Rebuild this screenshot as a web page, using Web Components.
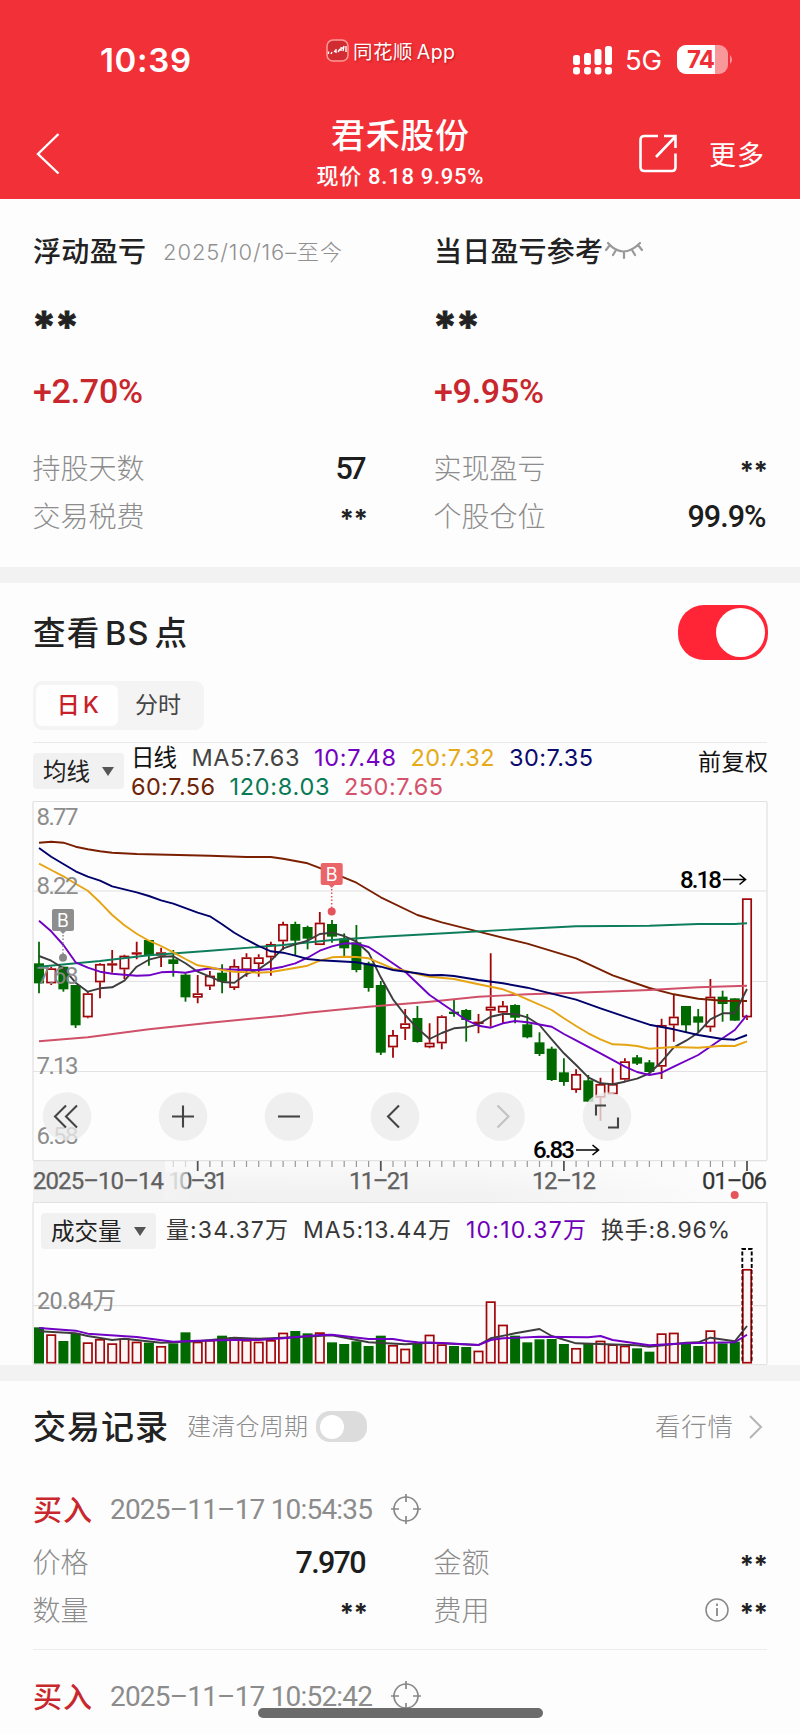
<!DOCTYPE html>
<html lang="zh-CN">
<head>
<meta charset="utf-8">
<title>君禾股份</title>
<style>
body{margin:0;background:#fdfdfd;color:#222;font-family:Inter,"Noto Sans CJK SC",sans-serif}
</style>
</head>
<body>
<stock-page></stock-page>
<script>
const define=(name,html,ready)=>customElements.define(name,class extends HTMLElement{
  connectedCallback(){
    if(this.shadowRoot)return;
    const t=document.createElement('template');t.innerHTML=html;
    this.attachShadow({mode:'open'}).append(t.content.cloneNode(true));
    if(ready)ready.call(this,this.shadowRoot);
  }
});

/* text run tracked out or in to a given width */
define('fit-text',`<style>:host{display:inline-block;white-space:nowrap;flex:none}span{display:inline-block}</style><span><slot></slot></span>`,function(root){
  const w=+this.getAttribute('w'),s=root.querySelector('span');
  if(!w)return;
  const n=[...this.textContent].length;
  s.style.letterSpacing=((w-s.getBoundingClientRect().width)/Math.max(1,n-1))+'px';
  this.style.width=w+'px';
});

define('status-bar',`<style>
:host{display:flex;align-items:center;height:108px;box-sizing:border-box;padding:12px 65px 0 100px;color:#fff}
.time{font-size:33px;font-weight:600;width:227px}
.mark{display:flex;align-items:center;gap:4px;margin-top:-19px;font-size:19.5px;text-shadow:1px 1px 2px #8008;width:247px;word-spacing:-2px}
.net{font-size:27.5px;margin:0 15px 0 13px}
svg{display:block;flex:none}
</style>
<div class="time"><fit-text w="91">10:39</fit-text></div>
<div class="mark"><svg width="23" height="23" viewBox="0 0 23 23"><rect x="1" y="1" width="21" height="21" rx="6" fill="#d22c33" stroke="#ff9b98" stroke-width="1.5"/><path d="M2.500 15V12.500M5 15L6 13M8 12L10 13L10 10M12 13L14 10M15 12V9L18 9M17 12L18 7M20 13V7" fill="none" stroke="#fff" stroke-width="1.400"/></svg><fit-text w="102">同花顺 App</fit-text></div>
<svg width="40" height="30" fill="#fff"><rect x="1" y="10" width="7" height="10" rx="2.5"/><rect x="12" y="8" width="7" height="12" rx="2.5"/><rect x="22.500" y="4" width="7" height="16" rx="2.5"/><rect x="33" y="1" width="7" height="19" rx="2.5"/><rect x="1" y="22" width="7" height="7.5" rx="3"/><rect x="12" y="22" width="7" height="7.5" rx="3"/><rect x="22.500" y="22" width="7" height="7.5" rx="3"/><rect x="33" y="22" width="7" height="7.5" rx="3"/></svg>
<div class="net"><fit-text w="37">5G</fit-text></div>
<svg width="58" height="30"><defs><clipPath id="b"><rect y="0" width="51" height="29" rx="9"/></clipPath></defs><g clip-path="url(#b)"><rect width="51" height="29" fill="#f9989b"/><rect width="38" height="29" fill="#fff"/></g><path d="M53 10q4 4.500 0 9z" fill="#f9989b"/><text x="10" y="23" font-size="24" font-weight="700" fill="#ef2e36" textLength="28">74</text></svg>`);

define('nav-bar',`<style>
:host{display:grid;grid-template-columns:280px 240px 1fr;height:91px;color:#fff}
.back{padding:25px 0 0 36px}
.mid{text-align:center}
.t{font-size:34px;line-height:46px;font-weight:500;margin-top:5px}
.s{font-size:22px;line-height:30px;margin-top:3px;font-family:Roboto,"Noto Sans CJK SC",sans-serif;font-weight:500}
.r{display:flex;align-items:flex-start;padding:26px 0 0 118px;gap:31px;font-size:27px}
.r fit-text{line-height:43px}
svg{display:block;flex:none}
</style>
<div class="back"><svg width="25" height="42" fill="none" stroke="#fff" stroke-width="2.400"><path d="M22.500 1L2 21L22.500 40.500"/></svg></div>
<div class="mid"><div class="t"><fit-text w="138">君禾股份</fit-text></div><div class="s"><fit-text w="167">现价 8.18 9.95%</fit-text></div></div>
<div class="r"><svg width="40" height="40" fill="none" stroke="#fff" stroke-width="2.600"><path d="M20 2H6.500Q2.500 2 2.500 6V33Q2.500 37 6.500 37H34Q37.500 37 37.500 33V19.500M26 2H37.500V14M37 3L18 23"/></svg><fit-text w="55">更多</fit-text></div>`);

define('kv-row',`<style>
:host{display:flex;justify-content:space-between;align-items:center;height:48px;font-size:28px;color:#8c8c8c;font-weight:300}
.k{margin:-3px 0 0 -.5px}
.v{display:flex;align-items:center;color:#1d1d1d;font:500 30.500px Roboto,sans-serif;margin-right:-.5px}
</style><span class="k"><slot></slot></span><div class="v"><slot name="icon"></slot><slot name="v"></slot></div>`);

/* pair of asterisks standing for a hidden amount */
define('hidden-amount',`<style>:host{display:block;width:27px;font:700 26px/34px Inter,sans-serif;color:#222;white-space:nowrap;height:34px}
:host([big]){width:50px;font-size:43px;line-height:50px;height:44px;margin-left:-1px}
div{padding-top:3px}:host([big]) div{padding-top:6px}</style><div><fit-text>**</fit-text></div>`,function(root){
  const big=this.hasAttribute('big'),f=root.querySelector('fit-text');
  f.style.letterSpacing=big?'-1px':'-.5px';
  if(big)f.style.webkitTextStroke='.8px #222';
});

define('profit-panel',`<style>
:host{display:grid;grid-template-columns:333px 332px;column-gap:68px;padding:0 33px;height:368px;border-bottom:16px solid #f2f2f3}
.h{display:flex;align-items:center;height:48px;margin-top:27px;font-size:28px;font-weight:500}
.d{font-size:22px;font-weight:300;color:#909090;margin-left:17px}
hidden-amount[big]{margin-top:21px}
.p{height:44px;line-height:44px;margin:30px 0 31px;font:500 34px/44px Roboto,sans-serif;color:#c8282d}
svg{display:block;margin-left:2px}
</style>
<section><div class="h"><fit-text w="113">浮动盈亏</fit-text><span class="d"><fit-text w="179">2025/10/16–至今</fit-text></span></div>
<hidden-amount big></hidden-amount><div class="p"><fit-text w="110">+2.70%</fit-text></div>
<kv-row>持股天数<fit-text slot="v" w="31">57</fit-text></kv-row><kv-row>交易税费<hidden-amount slot="v"></hidden-amount></kv-row></section>
<section><div class="h"><fit-text w="169">当日盈亏参考</fit-text><svg width="38" height="22" fill="none" stroke="#999" stroke-width="2.200" stroke-linecap="round"><path d="M3 4Q18 21 35 4M5 6L1 11M11 11L8 16M19 13V19M27 11L30 16M33 6L37 11"/></svg></div>
<hidden-amount big></hidden-amount><div class="p"><fit-text w="110">+9.95%</fit-text></div>
<kv-row>实现盈亏<hidden-amount slot="v"></hidden-amount></kv-row><kv-row>个股仓位<fit-text slot="v" w="79">99.9%</fit-text></kv-row></section>`);

define('toggle-switch',`<style>
:host{display:flex;box-sizing:border-box;width:51px;height:31px;border-radius:14px;background:#dcdcdd;padding:3.500px;flex:none}
i{width:24px;height:24px;border-radius:50%;background:#fff}
:host([on]){width:90px;height:55px;border-radius:26px;background:#ff2436;padding:3px;justify-content:flex-end;margin-right:-1px}
:host([on]) i{width:49px;height:49px}
</style><i></i>`);

define('select-chip',`<style>
:host{display:flex;box-sizing:border-box;align-items:center;justify-content:space-between;height:36px;border-radius:4px;background:#f1f1f1;font-size:23.500px;padding:0 10px;color:#222;flex:none}
span{margin-top:-2px}
i{border:6px solid transparent;border-top:9px solid #555;border-bottom:0}
</style><span><slot></slot></span><i></i>`);

const STEP=12.207,X0=39;
const X=i=>(X0+i*STEP).toFixed(1);
/* high, body top, body bottom, low in thirds of a pixel, and direction */
const CANDLES=`455 520 580 610 g|530 535 580 585 r|530 530 598 605 g|585 585 706 714 g|605 610 682 685 r|520 522 577 625 r|480 520 526 548 r|494 497 538 567 r|455 487 491 508 r|450 450 498 527 g|473 487 497 531 r|480 508 522 560 g|550 554 622 635 g|555 610 623 640 r|543 557 589 600 r|523 548 575 610 g|508 528 594 600 r|490 502 540 560 r|493 502 522 560 r|455 462 502 557 r|395 402 454 480 r|395 402 452 495 g|407 411 446 478 g|366 398 465 465 r|390 402 440 458 g|430 445 475 500 g|405 457 540 547 g|515 520 594 605 g|573 585 788 795 g|720 735 772 803 r|657 700 716 750 r|648 684 756 758 g|700 758 772 775 r|676 679 760 778 r|628 665 672 680 g|657 660 690 755 g|672 695 702 730 r|490 650 662 710 r|633 647 668 700 r|643 645 683 700 g|672 703 742 745 g|727 757 792 798 g|770 776 870 873 g|805 847 876 887 g|838 852 900 908 r|855 871 935 936 g|863 882 923 992 r|835 882 913 913 r|805 814 869 872 r|795 802 821 825 g|810 817 846 850 g|686 705 830 867 r|615 680 706 755 r|648 648 706 726 g|657 679 698 728 g|567 620 712 725 r|602 620 642 695 g|625 625 692 692 g|325 325 682 690 r`.split('|').map(s=>s.split(' '));
const VOLUME='382 403 423 400 427 417 430 415 425 428 438 430 397 425 420 407 412 420 425 420 398 393 400 397 427 432 424 438 407 435 446 432 404 433 438 441 452 304 374 407 427 418 417 432 444 432 422 433 437 445 455 400 398 430 438 391 430 425 207'.split(' ');
const VDIR='grggrrrrrgrggrrgrrrrrggrggggg'+'rrgrrggrrrgggggrgrrrggrrggrggr';
const MA={
 '#7a1f00':'0:158 1:155 2:158 3:170 4:178 5:184 6:188 8:192 14:197 17:201 19:201 20:206 22:220 24:248 26:278 28:322 31:375 33:397 36:425 40:461 44:505 47:556 50:594 52:613 54:626 56:632 58:633',
 '#0e7d5c':'0:530 5:513 9:496 14:482 20:465 24:450 28:440 34:428 40:416 44:409 50:407 54:402 57:402 58:400',
 '#cf5068':'0:754 4:742 9:718 14:698 20:677 22:668 27:650 32:635 36:620 40:613 44:608 50:600 54:592 58:587',
 '#3d3d3d':'0:498 1:512 2:535 3:578 4:605 5:595 6:592 7:572 8:530 9:509 10:500 11:499 12:520 13:545 14:560 15:576 16:578 17:552 18:538 19:512 20:475 21:463 22:452 23:432 24:428 25:438 26:455 27:488 28:562 29:628 30:675 31:715 32:747 33:729 34:715 35:712 36:703 37:680 38:672 39:672 40:682 41:705 42:748 43:790 44:825 45:862 46:880 47:883 48:875 49:866 50:850 51:815 52:772 53:752 54:728 55:688 56:670 57:670 58:597',
 '#6f00c4':'0:392 1:424 2:465 3:517 4:533 5:545 6:551 8:557 9:556 10:547 11:545 12:548 13:541 14:535 15:538 17:540 18:540 19:537 20:530 21:520 22:503 23:482 24:469 25:460 26:461 27:471 28:495 30:545 32:615 34:665 35:690 36:707 37:713 38:700 39:693 40:697 42:710 43:732 44:751 46:790 48:830 49:846 50:855 51:848 52:830 54:795 56:745 57:720 58:675',
 '#e6a412':'0:221 1:240 2:259 3:281 4:302 5:337 6:375 7:406 8:431 9:452 10:468 11:487 12:507 13:526 14:532 15:540 16:545 18:548 19:546 20:540 22:527 23:512 24:502 25:500 26:501 27:505 28:520 29:536 30:542 31:552 32:560 34:567 36:583 38:598 39:612 40:628 42:660 43:685 44:708 45:730 46:748 47:763 48:764 49:768 50:776 52:771 54:773 56:767 57:768 58:754',
 '#00006b':'0:174 1:200 2:222 3:244 4:260 5:272 6:289 8:307 9:318 10:331 11:341 13:368 14:379 15:403 16:428 17:449 18:468 19:484 20:488 21:497 22:507 23:511 26:517 28:530 29:540 31:550 32:556 33:555 34:558 36:570 38:580 40:593 44:629 46:655 48:680 50:704 52:718 54:735 56:747 57:749 58:735'};
const VMA={
 '#3d3d3d':'0:394 3:400 4:408 6:420 7:416 10:428 13:424 16:413 18:416 20:413 24:406 27:427 30:433 32:428 36:435 37:415 39:400 41:387 42:408 44:430 49:436 50:440 53:428 54:427 55:413 57:424 58:378',
 '#6f00c4':'0:384 3:392 4:401 8:411 11:425 13:422 16:420 18:420 20:415 23:405 24:404 27:417 29:417 30:423 31:427 33:429 36:435 37:420 38:415 41:410 45:412 46:408 47:420 50:436 53:430 57:427 58:404'};
const lines=(set,base)=>Object.entries(set).map(([c,s])=>`<polyline fill="none" stroke="${c}" stroke-width="1.900" stroke-linejoin="round" points="${s.split(' ').map(p=>{const[a,b]=p.split(':');return X(+a)+','+(base+b/3).toFixed(1)}).join(' ')}"/>`).join('');
const GREEN='#006a00',RED='#a00508';

function priceSvg(){
  const candles=CANDLES.map(([h,t,b,l,d],i)=>{
    const y=v=>790+v/3,x=+X(i),bh=Math.max(1.6,(b-t)/3),c=d=='g'?GREEN:RED;
    if(d=='g')return `<path d="M${x} ${y(h)}V${y(l)}" stroke="${c}" stroke-width="1.800"/><rect x="${x-5}" y="${y(t)}" width="10" height="${bh}" fill="${c}"/>`;
    return `<path d="M${x} ${y(h)}V${y(t)}M${x} ${y(b)}V${y(l)}" stroke="${c}" stroke-width="1.800"/><rect x="${x-4.2}" y="${y(t)+.8}" width="8.400" height="${Math.max(.6,bh-1.6)}" fill="#fdfdfd" stroke="${c}" stroke-width="1.700"/>`;
  }).join('');
  const lab=[['8.77',825],['8.22',894],['7.68',984],['7.13',1074],['6.58',1144]];
  const marker=(x,y,dot,c,dark)=>`<rect x="${x-11}" y="${y}" width="22" height="22" rx="2" fill="${c}"/><path d="M${x-3} ${y+22}h6l-3 3z" fill="${c}"/><path d="M${x} ${y+26}V${dot}" stroke="${dark}" stroke-width="1.500" stroke-dasharray="1.500 2"/><circle cx="${x}" cy="${dot}" r="4" fill="${dark}"/><text x="${x-6}" y="${y+17.500}" font-family="Inter" font-size="18" fill="#fff" textLength="12">B</text>`;
  let ticks='';
  for(let i=11;i<59;i++){const m=(i-13)%15==0;ticks+=`<path d="M${X(i)} 1161v${m?10:6}" stroke="${m?'#555':'#999'}" stroke-width="${m?1.8:1.2}" opacity="${i<13?.35:1}"/>`}
  const circle=(x,p,s='#444')=>`<circle cx="${x}" cy="1116.500" r="24.300" fill="#ebebeb" opacity=".78"/><path d="${p}" transform="translate(${x} 1116.500)" fill="none" stroke="${s}" stroke-width="2.100"/>`;
  return `<svg width="800" height="401" viewBox="0 801 800 401" font-family="Roboto,'Noto Sans CJK SC',sans-serif">
<defs><linearGradient id="ax"><stop offset="0" stop-color="#f1f1f1"/><stop offset=".6" stop-color="#f2f2f2"/><stop offset="1" stop-color="#fdfdfd"/></linearGradient>
<linearGradient id="av" x2="0" y2="1"><stop offset="0" stop-color="#fdfdfd" stop-opacity=".75"/><stop offset=".8" stop-color="#fdfdfd" stop-opacity="0"/></linearGradient>
<linearGradient id="fd"><stop offset="0" stop-color="#f3f3f3"/><stop offset=".5" stop-color="#f3f3f3" stop-opacity=".8"/><stop offset="1" stop-color="#f3f3f3" stop-opacity=".4"/></linearGradient></defs>
<rect x="33" y="1161" width="734" height="41" fill="url(#ax)"/><rect x="165" y="1161" width="602" height="41" fill="url(#av)"/>
<g stroke="#e2e2e2" stroke-width="1.200" fill="none"><path d="M33 801.500H767M33 891H767M33 981.500H767M33 1071.500H767M33 1160.700H767M33 802V1160M767 802V1160"/></g>
${candles}${lines(MA,790)}
<g fill="#888" font-size="24" opacity=".95">${lab.map(([t,y])=>`<text x="36.500" y="${y}" textLength="42">${t}</text>`).join('')}</g>
${marker(63,909,957.7,'#8e8e8e','#888')}${marker(331.7,863,911.5,'#ea6468','#e5535b')}
<g fill="#000" font-size="24" font-weight="500"><text x="680" y="888" textLength="42">8.18</text><text x="533" y="1158" textLength="42">6.83</text></g>
<path d="M723 879.500H745M739.500 874.500L745.500 879.500L739.500 884.500M576 1150H598M592.500 1145L598.500 1150L592.500 1155" fill="none" stroke="#000" stroke-width="1.600"/>
${circle(67,'M-1 -11L-12 0L-1 11M10 -11L-1 0L10 11')}${circle(183,'M-11 0H11M0 -11V11')}${circle(289,'M-11 0H11')}${circle(395,'M4 -11L-7 0L4 11')}${circle(500.5,'M-3 -11L8 0L-3 11','#c2c2c2')}${circle(607,'M-1 -11H-11V-1M11 1V11H1')}
${ticks}
<g fill="#606060" font-size="24" stroke="#606060" stroke-width=".25"><text x="168" y="1188.700" textLength="60">10–31</text><rect x="164" y="1172" width="24" height="28" fill="url(#fd)" stroke="none"/><text x="33" y="1188.700" textLength="131">2025–10–14</text><text x="349" y="1188.700" textLength="63">11–21</text><text x="532" y="1188.700" textLength="64">12–12</text><text x="702" y="1188.700" textLength="65" fill="#333" stroke="#333">01–06</text></g>
<circle cx="734.700" cy="1195" r="4" fill="#e5535b"/></svg>`;
}
function volumeSvg(){
  const bars=VOLUME.map((v,i)=>{
    const y=1200+v/3,x=+X(i);
    return VDIR[i]=='g'?`<rect x="${x-5}" y="${y}" width="10" height="${1363.5-y}" fill="${GREEN}"/>`:`<rect x="${x-4.2}" y="${y+.8}" width="8.400" height="${1361.9-y}" fill="#fdf6f6" stroke="${RED}" stroke-width="1.700"/>`;
  }).join('');
  return `<svg width="800" height="115" viewBox="0 1250 800 115" overflow="visible" font-family="Roboto,'Noto Sans CJK SC',sans-serif"><g stroke="#e2e2e2" stroke-width="1.200" fill="none"><path d="M33 1305.700H767M33 1364.500H767M33 1202.500H767M33 1202.500V1364M767 1202.500V1364"/></g>${bars}${lines(VMA,1200)}
<path d="M742.300 1268V1249H751.700V1268" fill="none" stroke="#000" stroke-width="1.900" stroke-dasharray="4 2.200"/><path d="M742.300 1270V1363M751.700 1270V1363" stroke="#500" stroke-width="1.700" stroke-dasharray="4 2.200"/>
<text x="37" y="1309" font-size="23.500" fill="#888" textLength="79">20.84万</text></svg>`;
}

define('price-chart',`<style>:host{display:block;height:401px}svg{display:block}</style>`+priceSvg());
define('volume-chart',`<style>:host{display:block;height:163px}
.l{display:flex;align-items:center;height:48px;padding:4px 0 0 41px;box-sizing:border-box;font-size:23px;color:#383838;white-space:nowrap}
select-chip{width:115px;margin-right:10px;margin-top:6px}svg{display:block}
.l fit-text{margin-right:15px;margin-top:0}.p{color:#6f00b8}</style>
<div class="l"><select-chip>成交量</select-chip><fit-text w="122">量:34.37万</fit-text><fit-text w="148">MA5:13.44万</fit-text><fit-text w="120" class="p">10:10.37万</fit-text><fit-text w="129">换手:8.96%</fit-text></div>`+volumeSvg());

define('bs-panel',`<style>
:host{display:block}
.h{display:flex;justify-content:space-between;align-items:center;height:55px;padding:22px 33px 0;font-size:32.500px;font-weight:500}
.h fit-text{word-spacing:-5px;margin-top:-4px}
.tabs{display:flex;box-sizing:border-box;width:171px;height:49px;margin:21px 0 0 33px;padding:4px;background:#f4f4f4;border-radius:9px;font-size:23px;line-height:40px;color:#444}
.tabs b{width:82px;background:#fefefe;border-radius:6px;color:#c8202a;text-align:center;font-weight:500;margin-left:-1px}
.tabs span{flex:1;text-align:center;margin-left:-2px}
.ma{display:flex;margin:12px 33px 0;border-top:1px solid #e9e9e9;height:58px;font-size:23.500px}
select-chip{width:91px;margin:10px 7px 0 0}
.g{width:480px}.g div{display:flex;gap:14.500px;height:28.500px;line-height:30px}
.adj{margin-left:auto;line-height:39px;font-size:23px;color:#111;margin-right:-1px}
</style>
<div class="h"><fit-text w="154">查看 BS 点</fit-text><toggle-switch on></toggle-switch></div>
<div class="tabs"><b><fit-text w="42">日 K</fit-text></b><span>分时</span></div>
<div class="ma"><select-chip>均线</select-chip><div class="g"><div><fit-text w="46" style="color:#111">日线</fit-text><fit-text w="108" style="color:#444">MA5:7.63</fit-text><fit-text w="82" style="color:#7400c2">10:7.48</fit-text><fit-text w="84" style="color:#e5ab18">20:7.32</fit-text><fit-text w="84" style="color:#0b0b6e">30:7.35</fit-text></div><div><fit-text w="84" style="color:#6f2407">60:7.56</fit-text><fit-text w="100" style="color:#087a55">120:8.03</fit-text><fit-text w="99" style="color:#d4536c">250:7.65</fit-text></div></div><fit-text class="adj" w="70">前复权</fit-text></div>
<price-chart></price-chart><volume-chart></volume-chart>`);

define('trade-item',`<style>
:host{display:block;padding:0 33px}
.h{display:flex;align-items:center;height:44px;font-size:29px;font-weight:500;color:#c8282d}
.h>fit-text{margin-top:-3px}
.h span{font:400 28px Roboto,sans-serif;color:#8c8c8c;margin:0 18px}
.g{display:grid;grid-template-columns:333px 332px;column-gap:68px;margin-top:7px;padding-bottom:15px;border-bottom:1px solid #ececec}
svg{display:block}svg[slot]{margin-right:11px}
</style>
<div class="h"><fit-text w="59">买入</fit-text><span><fit-text></fit-text></span><svg width="30" height="30" fill="none" stroke="#888" stroke-width="1.700"><circle cx="15" cy="15" r="12"/><path d="M15 0V8M15 22V30M0 15H8M22 15H30"/></svg></div>
<div class="g"><kv-row>价格<fit-text slot="v" w="71">7.970</fit-text></kv-row><kv-row>金额<hidden-amount slot="v"></hidden-amount></kv-row><kv-row>数量<hidden-amount slot="v"></hidden-amount></kv-row><kv-row>费用<svg slot="icon" width="24" height="24" fill="none" stroke="#888" stroke-width="1.500"><circle cx="12" cy="12" r="11"/><path d="M12 10V18M12 5.500V8" stroke-width="1.800"/></svg><hidden-amount slot="v"></hidden-amount></kv-row></div>`,function(root){
  const f=root.querySelector('span fit-text'),n=document.createElement('fit-text');
  n.textContent=this.getAttribute('time');n.setAttribute('w','263');f.replaceWith(n);
  if(this.hasAttribute('brief'))root.querySelector('.g').remove();
});

define('trade-list',`<style>
:host{display:block;border-top:16px solid #f2f2f3}
.h{display:flex;align-items:center;padding:0 33px;height:91px;color:#8c8c8c;font-weight:300}
.h fit-text{margin-top:-4px}
.t{font-size:33px;font-weight:500;color:#222;margin-right:19px}.c{font-size:24px;margin-right:8px}.m{font-size:25.500px;margin-left:auto;margin-right:15px}
svg{margin-right:4px}trade-item{margin-top:15px}trade-item[brief]{margin-top:24px}
</style><div class="h"><fit-text class="t" w="135">交易记录</fit-text><fit-text class="c" w="121">建清仓周期</fit-text><toggle-switch></toggle-switch><fit-text class="m" w="78">看行情</fit-text><svg width="15" height="24" fill="none" stroke="#b5b5b5" stroke-width="2"><path d="M2 1L13 12L2 23"/></svg></div>
<trade-item time="2025–11–17 10:54:35"></trade-item><trade-item brief time="2025–11–17 10:52:42"></trade-item>`);

define('stock-page',`<style>
:host{display:block;position:relative;width:800px;height:1734px;overflow:hidden}
header{background:#f23038;height:199px}
.home{position:absolute;left:258px;top:1708px;width:285px;height:10px;border-radius:5px;background:#6b6b6b}
</style><header><status-bar></status-bar><nav-bar></nav-bar></header><profit-panel></profit-panel><bs-panel></bs-panel><trade-list></trade-list><div class="home"></div>`);
</script>
</body>
</html>
